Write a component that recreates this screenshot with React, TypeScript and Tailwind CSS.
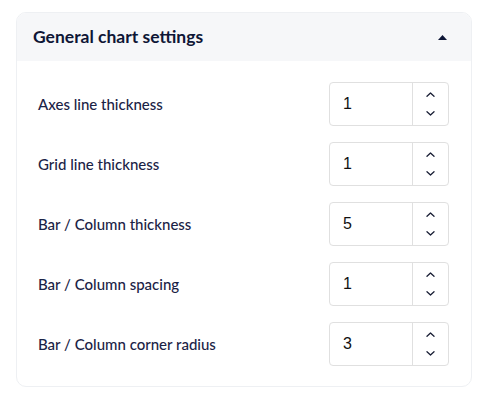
import { useState } from "react";

interface Setting {
    id: string;
    label: string;
    value: number;
}

const initialSettings: Setting[] = [
    { id: "axes", label: "Axes line thickness", value: 1 },
    { id: "grid", label: "Grid line thickness", value: 1 },
    { id: "barThickness", label: "Bar / Column thickness", value: 5 },
    { id: "barSpacing", label: "Bar / Column spacing", value: 1 },
    { id: "barRadius", label: "Bar / Column corner radius", value: 3 },
];

function Stepper({ value, onChange }: { value: number; onChange: (v: number) => void }) {
    return (
        <div className="flex h-[44px] w-[120px] rounded-[4px] border border-[#e0e0e0] bg-white">
            <div className="flex flex-1 items-center pl-[13px] text-[16px] text-[#111] font-['Liberation_Sans',Arial,sans-serif]">
                {value}
            </div>
            <div className="flex w-[36px] flex-col items-center justify-center gap-[14px] border-l border-[#e0e0e0]">
                <button onClick={() => onChange(value + 1)} className="block text-[#1a1f36]">
                    <svg width="9" height="5" viewBox="0 0 9 5" fill="none" className="block">
                        <path d="M1 4.2L4.5 1L8 4.2" stroke="currentColor" strokeWidth="1.3" strokeLinecap="round" strokeLinejoin="round" />
                    </svg>
                </button>
                <button onClick={() => onChange(Math.max(0, value - 1))} className="block text-[#1a1f36]">
                    <svg width="9" height="5" viewBox="0 0 9 5" fill="none" className="block">
                        <path d="M1 0.8L4.5 4L8 0.8" stroke="currentColor" strokeWidth="1.3" strokeLinecap="round" strokeLinejoin="round" />
                    </svg>
                </button>
            </div>
        </div>
    );
}

export default function App() {
    const [open, setOpen] = useState(true);
    const [settings, setSettings] = useState<Setting[]>(initialSettings);

    const update = (id: string, v: number) => {
        setSettings((prev) => prev.map((s) => (s.id === id ? { ...s, value: v } : s)));
    };

    return (
        <div className="min-h-screen bg-white pt-[12px] px-[16px] font-['Lato','Noto_Sans',sans-serif] text-[#121a3d]">
            <div className="w-[456px] overflow-hidden rounded-[10px] border border-[#eef0f3] bg-white">
                {/* Header */}
                <button
                    onClick={() => setOpen(!open)}
                    className="flex h-[48px] w-full items-center justify-between bg-[#f6f7f9] pl-[16px] pr-[24px]"
                >
                    <span className="text-[17.5px] font-bold text-[#0e1636]">General chart settings</span>
                    <svg width="9" height="5" viewBox="0 0 9 5" className={open ? "block" : "block rotate-180"}>
                        <path d="M4.5 0L9 5H0Z" fill="#0e1636" />
                    </svg>
                </button>

                {/* Body */}
                {open && (
                    <div className="flex flex-col gap-[16px] pt-[21px] pb-[20px] pl-[21px] pr-[22px]">
                        {settings.map((s) => (
                            <div key={s.id} className="flex items-center justify-between">
                                <span className="text-[15px] font-medium text-[#1b2346]">{s.label}</span>
                                <Stepper value={s.value} onChange={(v) => update(s.id, v)} />
                            </div>
                        ))}
                    </div>
                )}
            </div>
        </div>
    );
}
